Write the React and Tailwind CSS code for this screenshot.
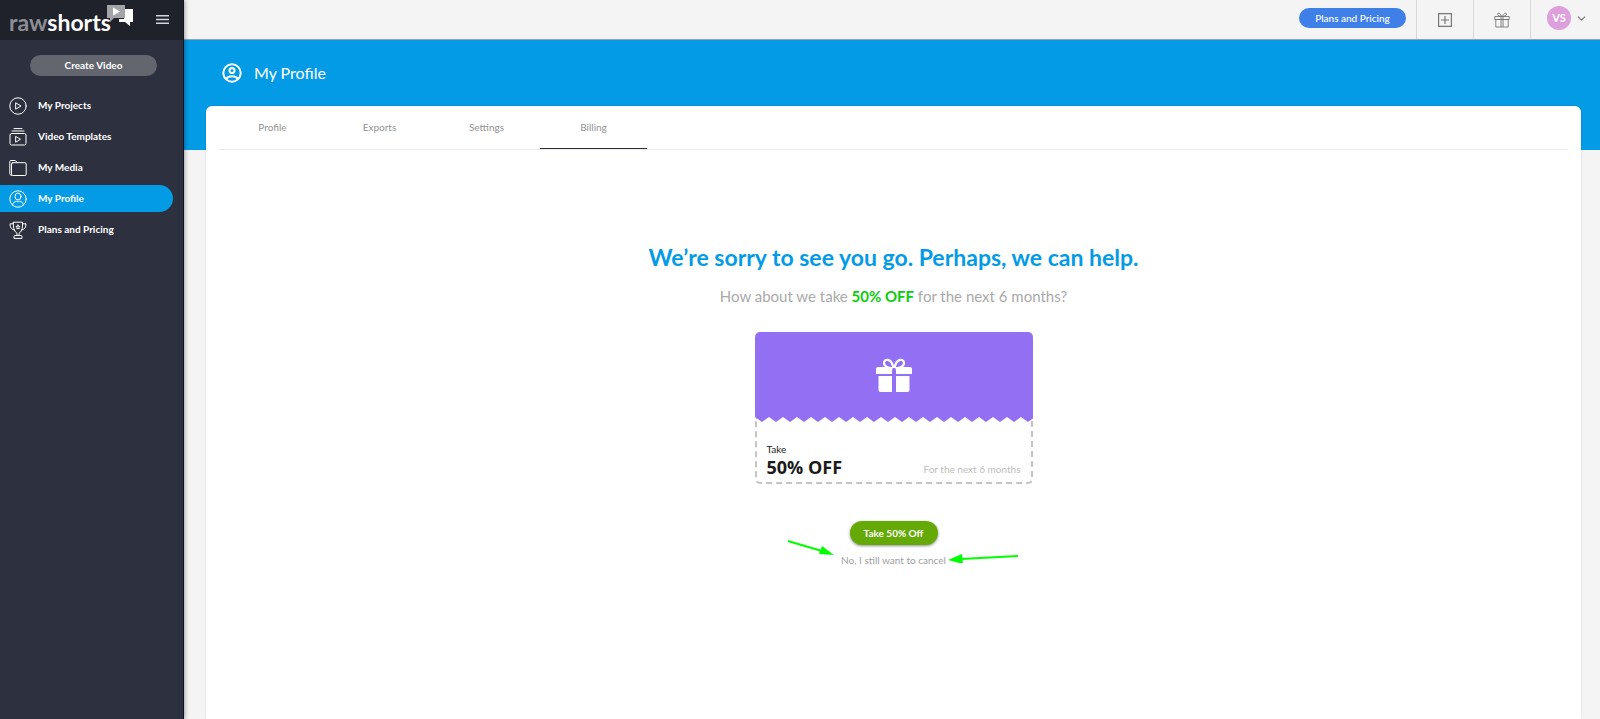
import { useState } from "react";
import { ChevronDown } from "lucide-react";

const iconProps = {
    viewBox: "0 0 18 18",
    fill: "none",
    stroke: "currentColor",
    strokeWidth: 1,
    strokeLinecap: "round",
    strokeLinejoin: "round",
    "aria-hidden": true,
    className: "w-[18px] h-[18px] shrink-0",
};

function ProjectsIcon() {
    return (
        <svg {...iconProps}>
            <circle cx="9" cy="9" r="8.2" />
            <path d="M7 6l5 3-5 3z" />
        </svg>
    );
}

function TemplatesIcon() {
    return (
        <svg {...iconProps}>
            <path d="M5 .6h8M3 3h12" />
            <rect x="1" y="5.5" width="16" height="11.500" rx="1.500" />
            <path d="M7 8.600l4.500 2.700L7 14z" />
        </svg>
    );
}

function MediaIcon() {
    return (
        <svg {...iconProps}>
            <path d="M2.500 16.500C1.200 16 .8 15.500.8 14.500V2.700c0-.7.4-1.200 1-1.200h4.500l2 2.200" />
            <rect x="2.500" y="3.700" width="14.700" height="12.800" rx="1.300" />
        </svg>
    );
}

function ProfileIcon() {
    return (
        <svg {...iconProps}>
            <circle cx="9" cy="9" r="8.2" />
            <ellipse cx="9" cy="6.500" rx="3" ry="3.500" />
            <path d="M3.500 15c.5-2.500 2-3.500 4-3.800.9.7 2.100.7 3 0 2 .3 3.500 1.300 4 3.800" />
        </svg>
    );
}

function TrophyIcon() {
    return (
        <svg {...iconProps}>
            <path d="M4.500 1.200h9v4c0 3.200-1.500 6-3.500 7v2.300H8v-2.300c-2-1-3.500-3.800-3.500-7z" />
            <path d="M4.500 2.800H1c0 3.500 1.500 6 4.800 6.400M13.500 2.800H17c0 3.500-1.500 6-4.800 6.400" />
            <path d="M5 17v-1.500c0-.6.4-1 1-1h6c.6 0 1 .4 1 1V17z" />
            <path d="M9 4l.6 1.300 1.400.2-1 1 .2 1.400L9 7.200l-1.200.7.2-1.400-1-1 1.400-.2z" />
        </svg>
    );
}

function MenuIcon() {
    return (
        <svg viewBox="0 0 13 9" className="w-[13px] h-[9px]" fill="currentColor" aria-hidden="true">
            <path d="M0 0h13v1.500H0zM0 3.700h13v1.500H0zM0 7.400h13v1.500H0z" />
        </svg>
    );
}

function AddIcon() {
    return (
        <svg viewBox="0 0 14 14" className="w-[14px] h-[14px]" fill="none" stroke="currentColor" aria-hidden="true">
            <path d="M.6.6h12.800v12.800H.6zM7 3v8M3 7h8" strokeWidth="1.200" />
        </svg>
    );
}

function GiftOutlineIcon() {
    return (
        <svg viewBox="0 0 16 16" className="w-4 h-4" fill="none" stroke="currentColor" strokeWidth=".9" aria-hidden="true">
            <path d="M.8 4.500h14.400v3H.8zM1.800 7.500h12.400v7.500H1.800zM7 4.500V15M9 4.500V15" />
            <path d="M7.500 4.300C5.800 4.300 3.500 3.700 3.500 2.200c0-1.700 2.500-1.500 4 2zM8.500 4.300c1.700 0 4-.6 4-2.100 0-1.700-2.500-1.500-4 2z" />
        </svg>
    );
}

function GiftIcon() {
    return (
        <svg viewBox="0 0 36 34" className="w-9 h-[34px]" fill="white" aria-hidden="true">
            <path d="M2 9h14v7H0v-5a2 2 0 0 1 2-2zM20 9h14a2 2 0 0 1 2 2v5H20z" />
            <path d="M2.500 18H16v16H4.500a2 2 0 0 1-2-2zM20 18h13.500v14a2 2 0 0 1-2 2H20z" />
            <path d="M16.500 10.500C14.500 10.500 8 9 8 5.200 8 .2 15.500-.2 17.500 10M19.500 10.500c2 0 8.500-1.500 8.500-5.300 0-5-7.500-5.400-9.500 4.800" fill="none" stroke="white" strokeWidth="2.200" />
        </svg>
    );
}

function AccountIcon() {
    return (
        <svg viewBox="0 0 20 20" className="w-5 h-5" fill="none" stroke="white" strokeWidth="2" aria-hidden="true">
            <circle cx="10" cy="10" r="8.700" />
            <circle cx="10" cy="7.600" r="2.500" />
            <path d="M4 16c1.500-2 3.500-2.800 6-2.800s4.500.8 6 2.800" />
        </svg>
    );
}

function Logo() {
    return (
        <a href="#home" aria-label="rawshorts" className="flex items-start">
            <span className="pt-[10px] text-[23px] leading-6 font-bold text-white">
                <span className="text-[#8d8e94]">raw</span>shorts
            </span>
            <svg viewBox="0 0 27 22" className="w-[27px] h-[22px] mt-1 -ml-1 shrink-0" aria-hidden="true">
                <path d="M17 5h9v13h-3v4l-5-4h-6v-3h5z" fill="white" />
                <path d="M0 1h18v13H7l-4 4v-4H0z" fill="#a3a4a9" />
                <path d="M6 3.500l7 4-7 4z" fill="white" />
            </svg>
        </a>
    );
}

const NAV_ITEMS = [
    { id: "projects", label: "My Projects", Icon: ProjectsIcon },
    { id: "templates", label: "Video Templates", Icon: TemplatesIcon },
    { id: "media", label: "My Media", Icon: MediaIcon },
    { id: "profile", label: "My Profile", Icon: ProfileIcon },
    { id: "pricing", label: "Plans and Pricing", Icon: TrophyIcon },
];

function Sidebar() {
    return (
        <aside className="w-46 shrink-0 bg-[#2d303e] border-r border-[#14161f] shadow-[1px_0_4px_rgba(0,0,0,0.35)] z-10 text-white">
            <div className="h-10 bg-[#1f212b] flex items-start justify-between pl-[9px] pr-[14px]">
                <Logo />
                <button aria-label="Toggle menu" className="mt-[15px] text-[#d5d6d9]">
                    <MenuIcon />
                </button>
            </div>
            <div className="pl-[30px] pr-[26px] pt-[15px]">
                <button className="w-full h-[21px] pb-px rounded-full bg-[#63666f] text-[10px] leading-4 font-bold flex items-center justify-center">
                    Create Video
                </button>
            </div>
            <nav className="mt-4 flex flex-col gap-1 pr-[10px]">
                {NAV_ITEMS.map(({ id, label, Icon }) => (
                    <a
                        key={id}
                        href={`#${id}`}
                        className={`h-[27px] pl-[9px] flex items-center gap-[11px] rounded-r-full text-[10px] font-bold ${
                            id === "profile" ? "bg-[#049be6]" : ""
                        }`}
                    >
                        <Icon />
                        {label}
                    </a>
                ))}
            </nav>
        </aside>
    );
}

function Topbar() {
    return (
        <header className="h-10 bg-[#f4f4f4] border-b border-[#8fa3b0] flex items-stretch justify-end text-[#777]">
            <div className="flex items-center pr-[10px] pb-[3px]">
                <a
                    href="#pricing"
                    className="w-[107px] h-5 rounded-full bg-[#3f80e8] text-white text-[10px] font-medium flex items-center justify-center"
                >
                    Plans and Pricing
                </a>
            </div>
            <button aria-label="Create" className="w-[57px] border-l border-[#d8d8d8] flex items-center justify-center">
                <AddIcon />
            </button>
            <button aria-label="Gifts" className="w-[57px] border-l border-[#d8d8d8] flex items-center justify-center">
                <GiftOutlineIcon />
            </button>
            <button aria-label="Account" className="w-[70px] border-l border-[#d8d8d8] flex items-center justify-end gap-1 pr-3 pb-[3px]">
                <span className="w-6 h-6 rounded-full bg-[#dda0dd] text-white text-[11px] font-bold flex items-center justify-center">
                    VS
                </span>
                <ChevronDown size={13} />
            </button>
        </header>
    );
}

const TABS = ["Profile", "Exports", "Settings", "Billing"];

function Coupon() {
    return (
        <div className="mt-6 w-[278px]">
            <div className="h-[85px] rounded-t-[5px] bg-[#926ff3] flex items-center justify-center">
                <GiftIcon />
            </div>
            <div className="relative h-[67px] border-2 border-t-0 border-dashed border-[#c4c4c4] rounded-b-[5px] px-[10px] flex flex-col justify-end pb-[5px]">
                <svg className="absolute -left-[2px] -top-px w-[278px] h-1.5" aria-hidden="true">
                    <defs>
                        <pattern id="teeth" width="14" height="6" patternUnits="userSpaceOnUse">
                            <path d="M0 0h14v1L7 6 0 1z" fill="#926ff3" />
                        </pattern>
                    </defs>
                    <rect width="278" height="6" fill="url(#teeth)" />
                </svg>
                <p className="text-[10px] leading-4 text-[#222]">Take</p>
                <div className="flex items-end justify-between">
                    <p className="font-['Open_Sans',sans-serif] text-[18px] leading-5 font-bold text-[#1a1a1a]">50% OFF</p>
                    <p className="text-[10px] leading-4 text-[#bdbdbd]">For the next 6 months</p>
                </div>
            </div>
        </div>
    );
}

// Hints pointing at the cancel link from both sides
function Arrows() {
    return (
        <svg
            viewBox="0 0 232 24"
            className="absolute left-1/2 -translate-x-1/2 -top-[13px] ml-2 w-[232px] h-6 pointer-events-none"
            fill="#00ff00"
            stroke="#00ff00"
            aria-hidden="true"
        >
            <path d="M2 2l34 10" strokeWidth="2" />
            <path d="M48 16l-15-1 3-8z" stroke="none" />
            <path d="M232 17l-57 3" strokeWidth="2" />
            <path d="M162 21l14-6 1 10z" stroke="none" />
        </svg>
    );
}

function BillingOffer() {
    return (
        <section className="flex flex-col items-center pt-[91px]">
            <h2 className="text-[23px] leading-8 font-bold text-[#049be6]">
                We’re sorry to see you go. Perhaps, we can help.
            </h2>
            <p className="mt-[11px] text-[15px] leading-6 text-[#a9a9a9]">
                How about we take <strong className="font-bold text-[#0bcd0b]">50% OFF</strong> for the next 6 months?
            </p>
            <Coupon />
            <button className="mt-[37px] w-[88px] h-6 rounded-full bg-[#65a906] text-white text-[10px] font-bold shadow-[0_1px_3px_rgba(0,0,0,0.45)]">
                Take 50% Off
            </button>
            <div className="relative mt-[7px] w-full flex justify-center">
                <a href="#cancel" className="text-[10px] leading-4 text-[#a0a0a0]">
                    No, I still want to cancel
                </a>
                <Arrows />
            </div>
        </section>
    );
}

export default function App() {
    const [tab, setTab] = useState("Billing");

    return (
        <div className="flex min-h-screen bg-[#f4f4f4] font-['Lato',sans-serif]">
            <Sidebar />
            <div className="flex-1 min-w-0 flex flex-col">
                <Topbar />
                <main className="flex-1 flex flex-col bg-[linear-gradient(#049be6_110px,#f4f4f4_110px)] pl-[22px] pr-[19px]">
                    <div className="h-[66px] pl-4 flex items-center gap-3 text-white">
                        <AccountIcon />
                        <h1 className="text-[16px] leading-6">My Profile</h1>
                    </div>
                    <div className="flex-1 bg-white rounded-t-[6px] shadow-[0_0_2px_rgba(0,0,0,0.15)] px-[13px]">
                        <div role="tablist" className="h-11 flex border-b border-[#ececec]">
                            {TABS.map((name) => (
                                <button
                                    key={name}
                                    role="tab"
                                    aria-selected={tab === name}
                                    onClick={() => setTab(name)}
                                    className={`w-[107px] border-b text-[10px] text-[#929292] ${
                                        tab === name ? "border-[#2d303e]" : "border-transparent"
                                    }`}
                                >
                                    {name}
                                </button>
                            ))}
                        </div>
                        <BillingOffer />
                    </div>
                </main>
            </div>
        </div>
    );
}
